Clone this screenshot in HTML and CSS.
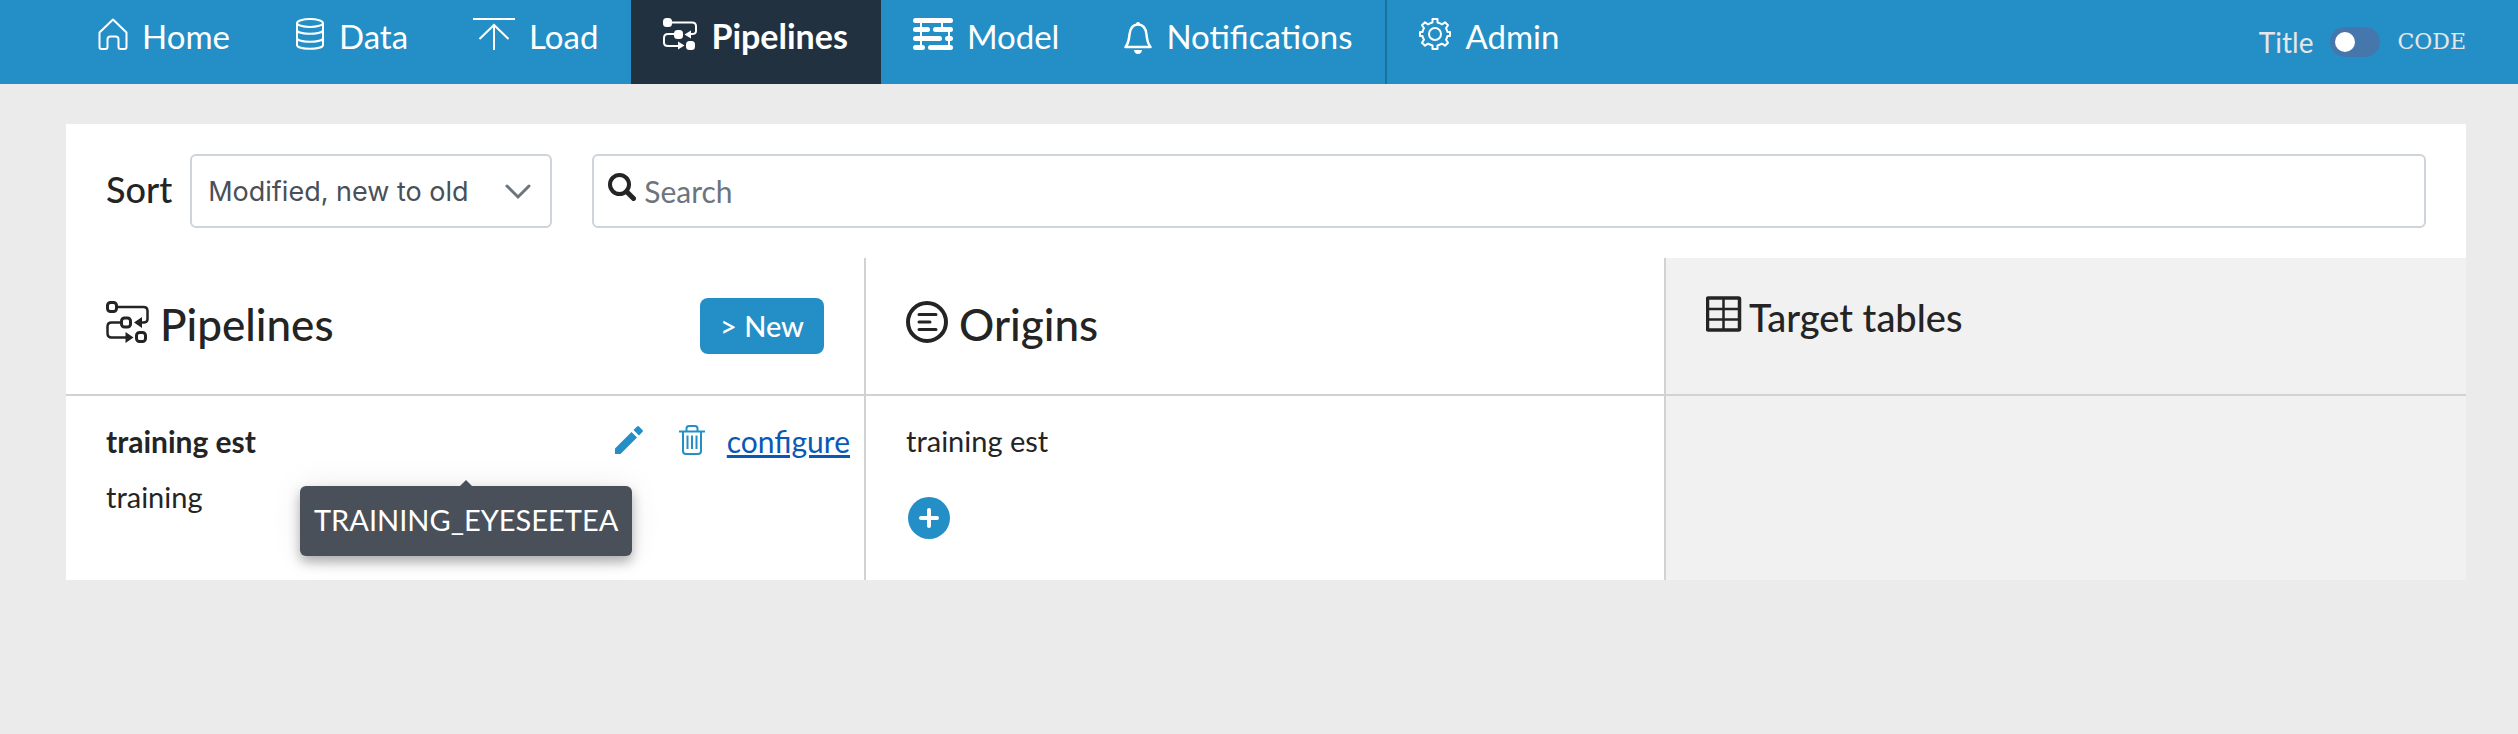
FILE: index.html
```html
<!DOCTYPE html>
<html lang="en">
<head>
<meta charset="utf-8">
<meta name="viewport" content="width=device-width, initial-scale=1">
<title>Pipelines</title>
<link rel="stylesheet" href="styles.css">
</head>
<body>
<header class="navbar">
  <nav class="nav">
    <a class="nav-item" href="#home">
      <svg class="icon" width="30" height="32" viewBox="1 0 30 32" fill="none" stroke="currentColor" stroke-width="2" stroke-linejoin="round"><path d="M16 1.500 2.500 14.500V29q0 2 2 2h4q2 0 2-2v-7.500q0-3 3-3h5q3 0 3 3V29q0 2 2 2h4q2 0 2-2V14.500Z"/></svg>
      <span>Home</span></a>
    <a class="nav-item" href="#data">
      <svg class="icon" width="30" height="32" viewBox="0 0 30 32" fill="none" stroke="currentColor" stroke-width="2"><ellipse cx="15" cy="5" rx="13" ry="4"/><path d="M2 5v22c0 5 26 5 26 0V5M2 12c0 5 26 5 26 0M2 20c0 5 26 5 26 0"/></svg>
      <span>Data</span></a>
    <a class="nav-item" href="#load">
      <svg class="icon" width="42" height="32" viewBox="0 0 42 32" fill="none" stroke="currentColor" stroke-width="2"><path d="M0 1h42M21 32V7M6.500 21 21 7l14.500 14"/></svg>
      <span>Load</span></a>
    <a class="nav-item nav-item-active" href="#pipelines" aria-current="page">
      <svg class="icon" width="34" height="32" viewBox="0 0 34 32"><g fill="none" stroke="currentColor" stroke-width="2"><path d="M8 4.500h21q4 0 4 4V13q0 3-4 3h-3M12 16H5q-4 0-4 4v4.500q0 3.500 4 3.500h11"/></g><g fill="currentColor"><rect width="9" height="9" rx="3.500"/><rect x="11" y="12" width="9" height="9" rx="3.500"/><rect x="23" y="23" width="9" height="9" rx="3.500"/><path d="M21.500 16.500 28 12.500v8zM21.500 27.500 15 23.500v8z"/></g></svg>
      <span>Pipelines</span></a>
    <a class="nav-item" href="#model">
      <svg class="icon" width="40" height="32" viewBox="0 0 40 32" fill="currentColor"><rect width="40" height="5" rx="2.500"/><rect y="9" width="17" height="5" rx="2.500"/><rect x="20" y="9" width="20" height="5" rx="2.500"/><rect y="18" width="29" height="5" rx="2.500"/><rect x="32" y="18" width="8" height="5" rx="2.500"/><rect y="27" width="12" height="5" rx="2.500"/><rect x="15" y="27" width="25" height="5" rx="2.500"/><path d="M7 4h2v24H7zM28 4h2v6h-2zM35 13h2v15h-2z"/></svg>
      <span>Model</span></a>
    <a class="nav-item" href="#notifications">
      <svg class="icon icon-bell" width="28" height="32" viewBox="0 0 28 32"><path d="M14 2.500C7.500 2.500 6 8 5.500 12.500 5 18 4.500 21.500 1.500 25h25c-3-3.500-3.500-7-4-12.500C22 8 20.500 2.500 14 2.500Z" fill="none" stroke="currentColor" stroke-width="2.500" stroke-linejoin="round"/><path d="M12 3V1.500q0-1.500 2-1.500t2 1.500V3zM10 28h8q-.5 4-4 4t-4-4Z" fill="currentColor"/></svg>
      <span>Notifications</span></a>
    <a class="nav-item nav-item-divided" href="#admin">
      <svg class="icon" width="32" height="32" viewBox="0 0 32 32" fill="none" stroke="currentColor" stroke-width="2" stroke-linejoin="round"><path d="M13.500 1h5v3.500q3 .8 4.500 1.800l3-2 3 3-2 3q1 1.700 1.500 3.700H31v4h-2.500q-.5 2-1.500 3.700l2 3-3 3-3-2q-1.500 1-4.500 1.800V31h-5v-3.500q-3-.8-4.500-1.800l-3 2-3-3 2-3Q3.800 20 3.500 18H1v-4h2.500q.4-2 1.500-3.700l-2-3 3-3 3 2q1.500-1 4.500-1.800Z"/><circle cx="16" cy="16" r="6"/></svg>
      <span>Admin</span></a>
  </nav>
  <div class="mode">
    <label for="mode-toggle">Title</label>
    <input class="toggle" id="mode-toggle" type="checkbox" role="switch">
    <label class="mode-code" for="mode-toggle">CODE</label>
  </div>
</header>

<main class="panel">
  <form class="filters">
    <div class="sort">
      <label class="sort-label" for="sort">Sort</label>
      <div class="select-wrap">
        <select class="select" id="sort"><option>Modified, new to old</option></select>
        <svg class="chevron" width="28" height="16" viewBox="0 0 28 16" fill="none" stroke="currentColor" stroke-width="3" stroke-linecap="round"><path d="m3 2 11 11L25 2"/></svg>
      </div>
    </div>
    <div class="search">
      <svg class="search-icon" width="28" height="28" viewBox="0 0 28 28" fill="none" stroke="currentColor"><circle cx="11.500" cy="11.500" r="9.500" stroke-width="4"/><path d="m18.500 18.500 7 7" stroke-width="5" stroke-linecap="round"/></svg>
      <input class="search-input" type="search" placeholder="Search" aria-label="Search">
    </div>
  </form>

  <table class="board">
    <thead>
      <tr>
        <th scope="col">
          <div class="column-head">
            <svg class="icon" width="43" height="42" viewBox="0 0 43 42"><g fill="none" stroke="currentColor" stroke-width="3"><rect x="1.500" y="1.500" width="9" height="9" rx="3"/><rect x="15.500" y="17" width="9" height="9" rx="3"/><rect x="30.500" y="31.500" width="9" height="9" rx="3"/><path d="M11 6h26.500q4 0 4 4v8q0 3.500-4 3.500H34M15 21.500H5.500q-4 0-4 4V32q0 4.500 4 4.500H20" stroke-width="2.500"/></g><path d="m28 21.500 8-5.500v11zM27.500 36.500l-8-5.500v11z" fill="currentColor"/></svg>
            <h2 class="column-title">Pipelines</h2>
            <button class="button" type="button">&gt; New</button>
          </div>
        </th>
        <th scope="col">
          <div class="column-head">
            <svg class="icon" width="42" height="42" viewBox="0 0 42 42" fill="none" stroke="currentColor" stroke-width="4"><circle cx="21" cy="21" r="19"/><path d="M13 13.500h17M13 21h11M13 28.500h17" stroke-width="3" stroke-linecap="round"/></svg>
            <h2 class="column-title">Origins</h2>
          </div>
        </th>
        <th class="target" scope="col">
          <div class="column-head column-head-small">
            <svg class="icon" width="36" height="36" viewBox="0 0 36 36" fill="none" stroke="currentColor"><rect x="1.500" y="2" width="32" height="32" rx="1" stroke-width="3.500"/><path d="M17.500 2v32M2 13h31M2 23.500h31" stroke-width="2.500"/></svg>
            <h2 class="column-title column-title-small">Target tables</h2>
          </div>
        </th>
      </tr>
    </thead>
    <tbody>
      <tr>
        <td>
          <div class="pipeline">
            <div class="pipeline-row">
              <strong class="pipeline-name">training est</strong>
              <div class="actions">
                <button class="icon-button" type="button" aria-label="Edit"><svg width="28" height="28" viewBox="0 0 28 28" fill="currentColor"><path d="M0 22.500 16.500 6l5.500 5.500L5.500 28H0zM18.500 4 22 .6q1-1 2 0L27.400 4q1 1 0 2L24 9.500z"/></svg></button>
                <button class="icon-button" type="button" aria-label="Delete"><svg width="26" height="30" viewBox="0 0 26 30" fill="none" stroke="currentColor" stroke-width="2"><path d="M0 6.500h26M7.500 6V3.500Q7.500 1 10 1h6q2.500 0 2.500 2.500V6M4 7v19q0 3 3 3h12q3 0 3-3V7M8.500 10.500V24M13 10.500V24M17.500 10.500V24"/></svg></button>
                <a class="link" href="#configure">configure</a>
              </div>
            </div>
            <p class="pipeline-code">training</p>
            <div class="tooltip" role="tooltip">TRAINING_EYESEETEA</div>
          </div>
        </td>
        <td>
          <div class="origin">
            <p class="origin-name">training est</p>
            <button class="add" type="button" aria-label="Add origin"><svg width="42" height="42" viewBox="0 0 42 42" fill="none" stroke="currentColor" stroke-width="4" stroke-linecap="round"><path d="M21 13v16M13 21h16"/></svg></button>
          </div>
        </td>
        <td class="target"></td>
      </tr>
    </tbody>
  </table>
</main>
</body>
</html>
```

FILE: styles.css
```css
:root {
  --blue: #238fc6;
  --ink: #242424;
  --line: #d2d2d2;
  --field-line: #ced4da;
}

* {
  box-sizing: border-box;
}

body {
  margin: 0;
  background: #ebebeb;
  color: var(--ink);
  font-family: Lato, "Open Sans", sans-serif;
  font-size: 29px;
  line-height: 42px;
}

h2,
p {
  margin: 0;
}

button,
input,
select {
  font: inherit;
}

svg {
  display: block;
}

.icon {
  flex: none;
}

.navbar {
  display: flex;
  justify-content: space-between;
  height: 84px;
  padding: 0 52px 0 66px;
  background: var(--blue);
  color: #fff;
}

.nav {
  display: flex;
}

.nav-item {
  display: flex;
  align-items: flex-start;
  gap: 14px;
  padding: 18px 33px 0 32px;
  color: inherit;
  font-size: 33px;
  line-height: 36px;
  text-decoration: none;
}

.nav-item-active {
  background: #22313f;
  font-size: 34px;
  font-weight: 700;
}

.nav-item-divided {
  border-left: 2px solid #1b72a0;
}

.icon-bell {
  margin-top: 4px;
}

.mode {
  display: flex;
  align-items: center;
  gap: 17px;
  color: #e6e6e6;
  font-size: 28px;
  line-height: 40px;
}

.mode-code {
  font-family: "DejaVu Serif", serif;
  font-size: 22px;
}

.toggle {
  appearance: none;
  display: flex;
  align-items: center;
  width: 50px;
  height: 30px;
  margin: 0;
  padding: 0 5px;
  border-radius: 15px;
  background: #4577ac;
}

.toggle::before {
  content: "";
  width: 20px;
  height: 20px;
  border-radius: 50%;
  background: #fff;
}

.toggle:checked::before {
  margin-left: auto;
}

.panel {
  margin: 40px 52px 0 66px;
  background: #fff;
}

.filters {
  display: flex;
  gap: 40px;
  padding: 30px 40px;
}

.sort {
  display: flex;
  align-items: center;
  gap: 18px;
}

.sort-label {
  padding-bottom: 4px;
  font-size: 36px;
  font-weight: 500;
}

.select-wrap {
  position: relative;
}

.select {
  appearance: none;
  width: 362px;
  height: 74px;
  padding: 2px 64px 0 16px;
  border: 2px solid var(--field-line);
  border-radius: 6px;
  background: #fff;
  color: #495057;
  font-family: Inter, sans-serif;
  font-size: 27px;
}

.chevron {
  position: absolute;
  top: 30px;
  right: 20px;
  color: #6c757d;
  pointer-events: none;
}

.search {
  display: flex;
  flex: 1;
  gap: 8px;
  height: 74px;
  padding: 0 14px;
  border: 2px solid var(--field-line);
  border-radius: 6px;
}

.search-icon {
  flex: none;
  margin-top: 17px;
}

.search-input {
  appearance: none;
  flex: 1;
  padding: 0;
  border: 0;
  outline: 0;
  background: none;
  font-size: 30px;
}

.search-input::placeholder {
  color: #6c757d;
}

.board {
  width: 100%;
  border-spacing: 0;
  table-layout: fixed;
}

.board th,
.board td {
  padding: 0;
  border-right: 2px solid var(--line);
  text-align: left;
  vertical-align: top;
}

.board th {
  border-bottom: 2px solid var(--line);
  font-weight: 500;
}

.board th:last-child,
.board td:last-child {
  border-right: 0;
}

.board .target {
  background: #f1f1f1;
}

.column-head {
  display: flex;
  gap: 11px;
  height: 136px;
  padding: 43px 40px 0;
}

.column-head-small {
  gap: 7px;
  padding-top: 38px;
}

.column-title {
  font-size: 44px;
  font-weight: 500;
  line-height: 46px;
}

.column-title-small {
  font-size: 38px;
  line-height: 42px;
}

.button {
  height: 56px;
  margin: -3px 0 0 auto;
  padding: 0 20px;
  border: 0;
  border-radius: 8px;
  background: var(--blue);
  color: #fff;
}

.pipeline {
  position: relative;
  height: 184px;
  padding: 24px 14px 0 40px;
}

.pipeline-row {
  display: flex;
  justify-content: space-between;
}

.pipeline-name {
  font-size: 30px;
}

.actions {
  display: flex;
}

.icon-button {
  height: 30px;
  margin-top: 5px;
  padding: 0;
  border: 0;
  background: none;
  color: var(--blue);
}

.icon-button + .icon-button {
  margin-left: 36px;
}

.link {
  margin-left: 22px;
  color: #0a58b5;
  font-size: 30px;
}

.pipeline-code {
  margin-top: 14px;
}

.tooltip {
  position: absolute;
  top: 90px;
  left: 234px;
  padding: 13px 14px 15px;
  border-radius: 6px;
  background: #4a5059;
  box-shadow: 0 6px 12px rgba(0, 0, 0, 0.3), 0 0 32px rgba(0, 0, 0, 0.08);
  color: #fff;
}

.tooltip::before {
  content: "";
  position: absolute;
  top: -6px;
  left: calc(50% - 8px);
  border: 8px solid transparent;
  border-top: 0;
  border-bottom-color: #4a5059;
}

.origin {
  padding: 24px 40px 0;
}

.add {
  margin: 35px 0 0 2px;
  padding: 0;
  border: 0;
  border-radius: 50%;
  background: var(--blue);
  color: #fff;
}
```
